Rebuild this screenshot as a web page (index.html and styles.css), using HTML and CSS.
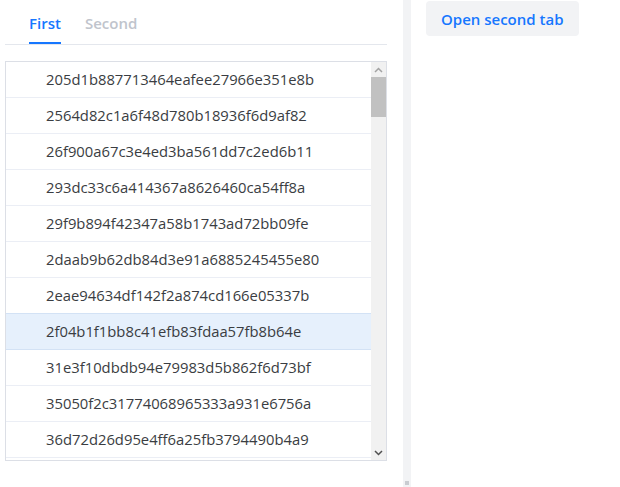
FILE: index.html
```html
<!DOCTYPE html>
<html>
<head>
<meta charset="utf-8">
<link rel="stylesheet" href="styles.css">
</head>
<body>
<div class="app">
  <section class="left">
    <nav class="tabs">
      <div class="tab active">First</div>
      <div class="tab">Second</div>
    </nav>
    <div class="listbox">
      <ul class="list">
        <li class="row">205d1b887713464eafee27966e351e8b</li>
        <li class="row">2564d82c1a6f48d780b18936f6d9af82</li>
        <li class="row">26f900a67c3e4ed3ba561dd7c2ed6b11</li>
        <li class="row">293dc33c6a414367a8626460ca54ff8a</li>
        <li class="row">29f9b894f42347a58b1743ad72bb09fe</li>
        <li class="row">2daab9b62db84d3e91a6885245455e80</li>
        <li class="row">2eae94634df142f2a874cd166e05337b</li>
        <li class="row selected">2f04b1f1bb8c41efb83fdaa57fb8b64e</li>
        <li class="row">31e3f10dbdb94e79983d5b862f6d73bf</li>
        <li class="row">35050f2c31774068965333a931e6756a</li>
        <li class="row">36d72d26d95e4ff6a25fb3794490b4a9</li>
        <li class="row">3a1f6c2e8b04471d9c5e2a7f3b60d914</li>
        <li class="row">3b92e4d07c1a4f6b8e23d5a9f0c47b16</li>
        <li class="row">3d05a8c7e2f14b39a6d1e8c02f57b94a</li>
        <li class="row">3e7bc41a9d2648f0b5e3c7a1d96f2e08</li>
        <li class="row">40f2d9a6c3b8457e91a0e6d4c25b7f38</li>
        <li class="row">4258e1b7d0c94a36a8f2b5e9d17c3a60</li>
        <li class="row">43c6a0f8e2d14b7995e3c1a6f08d2b47</li>
        <li class="row">45d91e3b7a6c402f8b5d0e4a9c7f1362</li>
        <li class="row">47a0c5e8d2b6491f83e7a9c1d054b6f2</li>
        <li class="row">48e3b7d1a9c54f06b2d8e0a3c7f91b25</li>
        <li class="row">4a1f9c6e2d7b48a3950e6c1b8d4f2a73</li>
        <li class="row">4bd2e8a05c7f4391a6e0d3b9c2f58e14</li>
        <li class="row">4d6a1c9e3b0f47d5a8e2c6b1f94d0a37</li>
        <li class="row">4f03b8e6d1a2495c87e3a0d6b2c9f415</li>
        <li class="row">50c7e2a9d4b64f1088a5d3e0c6b2f971</li>
        <li class="row">5291d5b0e8a34c6f9b2e7d1a0c5f38e4</li>
        <li class="row">53e8a2c6d9f1470b85a3e6c0d2b49f17</li>
        <li class="row">55b0d7e3a1c84f6a92e5b8d0c3a7f612</li>
        <li class="row">5716f4a9e2c3480d96b1e7a5d0c2f834</li>
        <li class="row">58a3d0e7c5b1469f82e4a6d9c1b03f57</li>
        <li class="row">5a6e2c9b1d7f40a385e0c4b6d2a9f718</li>
        <li class="row">5c04b8e3a6d9421f97c5e0a2d8b6f341</li>
        <li class="row">5d9f1a7c3e0b48d6a5e2c8b0d4f63a92</li>
        <li class="row">5f32c6e0a8d1497bb6e3a9c5d0f2184e</li>
        <li class="row">61a7e4d2b9c0463f88d5a1e6c3b07f29</li>
        <li class="row">62e0c8a5d3b14f7991a6e2d0c8b5f346</li>
        <li class="row">6483b1f7e9a2450c9d6e3a8b1c04f7d2</li>
        <li class="row">65f9a2d6c0e84b3187e5d1a3c9b60f24</li>
        <li class="row">6761d4b8a2e0497c95b3e6a0d1c8f357</li>
        <li class="row">68c2e9a0d7b34f1586a4e2d9c0b15f73</li>
        <li class="row">6a50b3e8c1d6472f93e0a5d7b2c4f916</li>
        <li class="row">6bd7e1a4c9f0453b88e6d2a0c3b74f19</li>
        <li class="row">6d29a6e0b3c8471d95f2e4a1d6c0b387</li>
        <li class="row">6ea4c2d9e5b14f0782a6e3d0c9b15f42</li>
        <li class="row">7031e7b4a0d6495c86b2e1a9c3d0f758</li>
        <li class="row">71c8a3e6d2b04f9197e5a0c2d6b83f14</li>
        <li class="row">7342f0b9e6a1482d93c5e7a0d1b64f29</li>
        <li class="row">74b9d5a2c8e0417f86e3b9a1d0c52f73</li>
        <li class="row">7670a1e8d3c54b2995e6a4d0c7b13f82</li>
        <li class="row">77e5c6b0a9d2463f81a4e7d2c0b95f16</li>
        <li class="row">795ab2e4d1c0487e92b6e3a5d9c04f17</li>
        <li class="row">7ad3e8c1b6a04f2995e0d7a3c2b68f41</li>
        <li class="row">7c6f9a3d0e2b41c786a5e1d4c0b97f23</li>
        <li class="row">7de0a5c8b3d6492f83e7a1d0c5b24f96</li>
        <li class="row">7f8b3d1e6a9c40d592e4a7c0d1b36f58</li>
        <li class="row">8104c7e2a9d5463b97a1e5d0c8b27f14</li>
        <li class="row">82a9e0b6d3c1487f95e2a6d4c0b13f79</li>
        <li class="row">8435d2a8c6e04b1f83a7e1d9c5b20f46</li>
        <li class="row">85c1a7e3d0b94f6291e5a2d8c6b04f37</li>
        <li class="row">8768e4b0a2d5491c86b3e7a0d9c25f18</li>
        <li class="row">88f2c9a6e1d34b7085e0a4d2c7b69f31</li>
        <li class="row">8a9d0e5b3c7a462f91e6d1a8c0b45f27</li>
        <li class="row">8c17a3e8d6b04c2995e2a0d7c3b61f48</li>
        <li class="row">8dc4e0a2b9d5471f86a3e6d0c2b97f15</li>
        <li class="row">8f5ba7d1e3c0496e92b4e8a0d6c23f71</li>
        <li class="row">90e2d6b9a4c1483f85e7a2d0c9b16f34</li>
        <li class="row">9278a0e3c5d64b1f97e1a5d2c8b40f63</li>
        <li class="row">93f5c2a9e0d7415b86a4e3d1c6b09f28</li>
        <li class="row">9591e7b4d2a0463c92e5a8d0c3b71f46</li>
        <li class="row">971ca3e6d8b04f2985e0a1d7c2b63f94</li>
        <li class="row">98b6d0a5e2c9417f83e6a4d1c0b58f27</li>
        <li class="row">9a40e8c3b6d1492f96a5e0d2c7b13f84</li>
        <li class="row">9bd3a1e7c0d54b6f82e3a9d6c1b07f35</li>
        <li class="row">9d6ae4b2d8a0473c95e1a7d0c6b24f19</li>
        <li class="row">9f05c7a3e9d14b2f86a4e0d5c3b76f21</li>
        <li class="row">a09ed1b6a3c0487f92e5a2d8c1b49f36</li>
        <li class="row">a237e4c0d6b94a1f87e3a5d0c2b68f14</li>
        <li class="row">a3cf0a8e2d5b461c93e6a1d7c0b52f47</li>
        <li class="row">a561b7d3e0a94c2f86e4a0d9c5b13f72</li>
        <li class="row">a6f4e2a9c7d0413b95e1a6d2c8b07f63</li>
        <li class="row">a88bc5e1a3d6492f84e7a0d3c1b56f29</li>
        <li class="row">aa2d0b7e4c9a461f93e5a2d6c0b87f14</li>
        <li class="row">abc6e3a0d8b54f1792e6a4d1c3b09f58</li>
        <li class="row">ad59a7d2e1c0483f85e3a6d9c2b47f16</li>
        <li class="row">aef1d4b8a6e2497c96e0a3d5c1b28f43</li>
        <li class="row">b08ce2a5d3b0461f87e4a1d6c9b35f72</li>
        <li class="row">b21f9b6e0d7a4c3f92e5a8d0c1b64f27</li>
        <li class="row">b3b5d8a2e4c1497f83e6a0d2c5b19f46</li>
        <li class="row">b54ea1e7c3d0482f96a2e5d8c0b73f15</li>
        <li class="row">b6e2c4b0a9d5413f85e7a1d3c6b02f98</li>
        <li class="row">b87ad9a3e6c2475f91e0a4d7c1b86f34</li>
        <li class="row">ba13e6c8d0b94a2f87e5a2d1c3b47f69</li>
        <li class="row">bbace0a5d7c14b3f92e6a0d9c4b18f25</li>
        <li class="row">bd45b8e2a3d0476f83e1a7d5c2b96f14</li>
        <li class="row">bf02a6d9c4e1483f95b7e2a0d3c68f17</li>
        <li class="row">c0b7e3a1d8c5462f93e6a4d0c2b71f58</li>
        <li class="row">c25ad0e6b3a9471f86e2d5a1c0b48f39</li>
      </ul>
      <div class="scrollbar">
        <div class="sb-btn">
          <svg width="9" height="6" viewBox="0 0 9 6"><path d="M1 5 L4.5 1.5 L8 5" fill="none" stroke="#a3a3a3" stroke-width="1.5"/></svg>
        </div>
        <div class="sb-track"><div class="sb-thumb"></div></div>
        <div class="sb-btn">
          <svg width="9" height="6" viewBox="0 0 9 6"><path d="M1 1 L4.5 4.5 L8 1" fill="none" stroke="#505050" stroke-width="1.5"/></svg>
        </div>
      </div>
    </div>
  </section>
  <div class="gutter"><span class="gutter-thumb"></span></div>
  <section class="right">
    <button class="open-btn" type="button">Open second tab</button>
  </section>
</div>
</body>
</html>
```

FILE: styles.css
```css
* { box-sizing: border-box; }
html, body {
  margin: 0;
  padding: 0;
  background: #fff;
  font-family: "Open Sans", "Noto Sans", sans-serif;
  color: #303133;
}
.app {
  display: flex;
  height: 487px;
  overflow: hidden;
}
.left {
  width: 403px;
  padding: 0 16px 0 5px;
  flex: none;
}
.tabs {
  display: flex;
  gap: 24px;
  height: 45px;
  padding-left: 24px;
  border-bottom: 1px solid #e4e7ed;
}
.tab {
  font-size: 15px;
  font-weight: 600;
  color: #c0c4cc;
  line-height: 20px;
  padding-top: 13px;
  height: 44px;
}
.tab.active {
  color: #1677ff;
  border-bottom: 2px solid #1677ff;
}
.listbox {
  display: flex;
  margin-top: 16px;
  height: 400px;
  border: 1px solid #dcdfe6;
}
.list {
  flex: 1;
  list-style: none;
  margin: 0;
  padding: 0;
  overflow: hidden;
}
.row {
  height: 36px;
  line-height: 35px;
  padding-left: 40px;
  border-bottom: 1px solid #ebeef5;
  font-size: 14.8px;
  color: #3a3d42;
  white-space: nowrap;
}
.row.selected {
  background: #e6f0fc;
  border-bottom-color: #d3e2f5;
  box-shadow: 0 -1px 0 #d3e2f5;
}
.scrollbar {
  width: 15px;
  flex: none;
  display: flex;
  flex-direction: column;
  background: #f1f1f1;
}
.sb-btn {
  height: 15px;
  flex: none;
  display: flex;
  align-items: center;
  justify-content: center;
}
.sb-btn svg { display: block; }
.sb-track {
  flex: 1;
}
.sb-thumb {
  height: 40px;
  background: #c1c1c1;
}
.gutter {
  width: 8px;
  flex: none;
  background: #f2f3f5;
  position: relative;
}
.gutter-thumb {
  position: absolute;
  left: 2px;
  bottom: 2px;
  width: 4px;
  height: 4px;
  background: #c9ccd1;
}
.right {
  flex: 1;
  padding: 1px 0 0 15px;
}
.open-btn {
  border: none;
  background: #f2f3f5;
  border-radius: 4px;
  height: 35px;
  padding: 0 15px;
  font-family: "Open Sans", "Noto Sans", sans-serif;
  font-size: 15px;
  font-weight: 600;
  color: #1677ff;
  cursor: pointer;
}
```
